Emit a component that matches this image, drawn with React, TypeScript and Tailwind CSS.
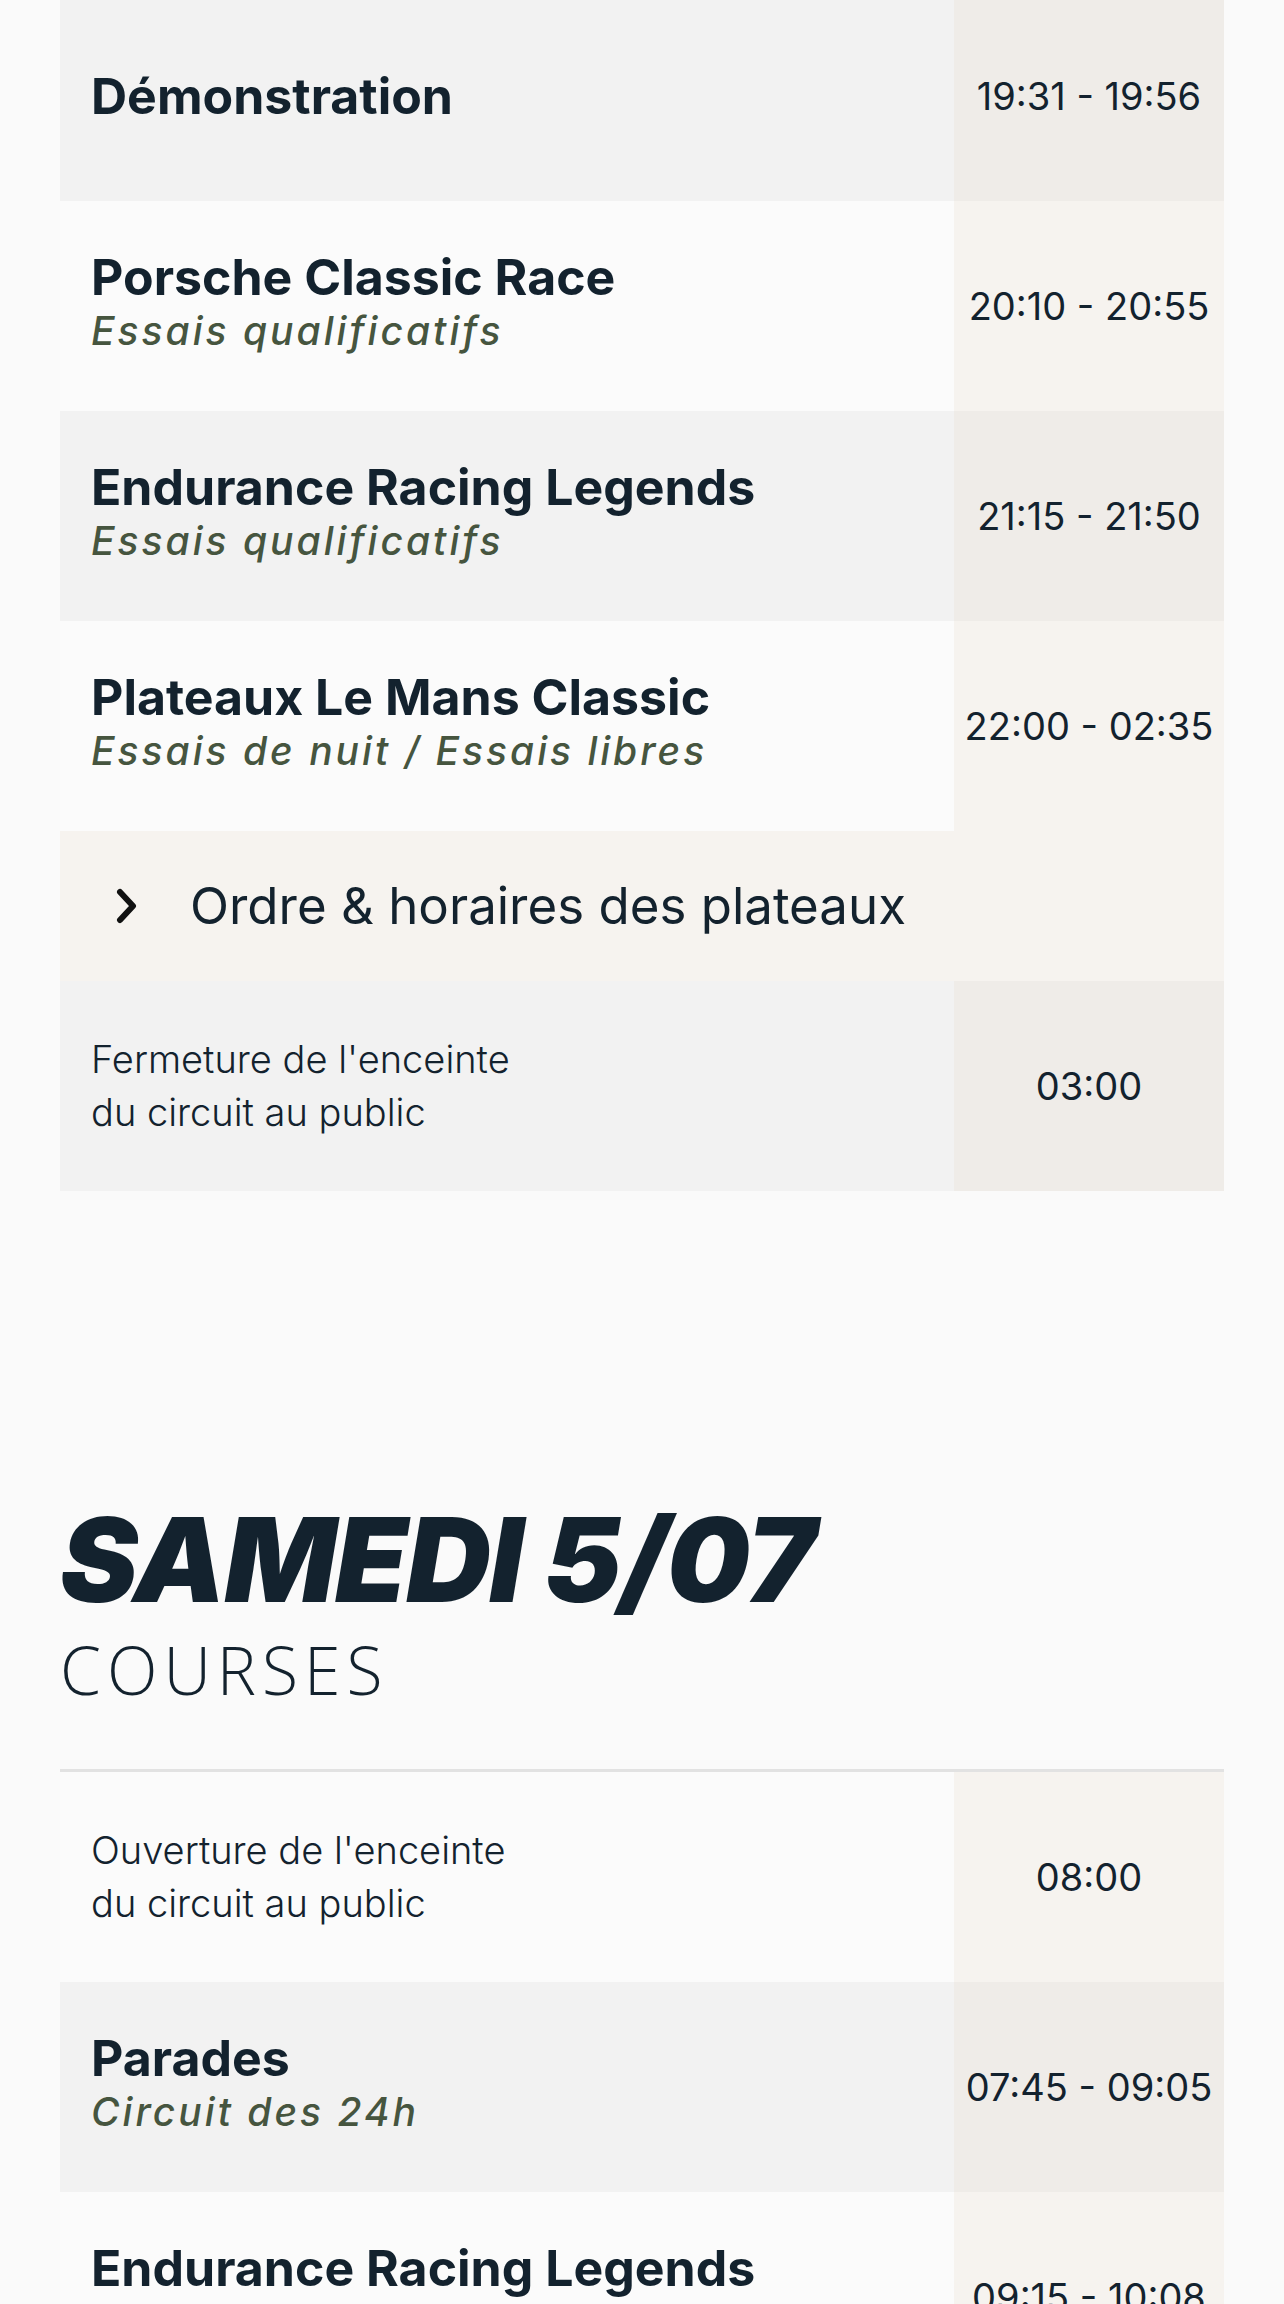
import { ReactNode } from "react";

type Slot = {
  title?: string;
  sub?: string;
  lines?: string[];
  time: string;
};

const friday: Slot[] = [
  { title: "Démonstration", time: "19:31 - 19:56" },
  { title: "Porsche Classic Race", sub: "Essais qualificatifs", time: "20:10 - 20:55" },
  { title: "Endurance Racing Legends", sub: "Essais qualificatifs", time: "21:15 - 21:50" },
  { title: "Plateaux Le Mans Classic", sub: "Essais de nuit / Essais libres", time: "22:00 - 02:35" },
];

const saturday: Slot[] = [
  { lines: ["Ouverture de l'enceinte", "du circuit au public"], time: "08:00" },
  { title: "Parades", sub: "Circuit des 24h", time: "07:45 - 09:05" },
  { title: "Endurance Racing Legends", sub: "Course", time: "09:15 - 10:08" },
];

function Row({ slot, shaded }: { slot: Slot; shaded: boolean }) {
  return (
    <div className="grid grid-cols-[1fr_270px] h-[210px]">
      <div className={`flex flex-col justify-center pl-[31px] pr-4 ${shaded ? "bg-[#f2f2f2]" : "bg-[#fbfbfb]"}`}>
        {slot.lines ? (
          <div className="font-['Inter',sans-serif] font-light text-[38px] leading-[53px] text-[#13222e]">
            {slot.lines.map((l) => (
              <div key={l}>{l}</div>
            ))}
          </div>
        ) : (
          <>
            <div className="font-['Inter',sans-serif] font-bold text-[50px] leading-[50px] text-[#13222e]">
              {slot.title}
            </div>
            {slot.sub && (
              <div className="font-['Inter',sans-serif] font-medium italic text-[39px] leading-[58px] tracking-[3px] text-[#46553f]">
                {slot.sub}
              </div>
            )}
          </>
        )}
      </div>
      <div
        className={`flex items-center justify-center font-['Inter',sans-serif] text-[38px] text-[#13222e] whitespace-nowrap ${
          shaded ? "bg-[#efece8]" : "bg-[#f6f3ef]"
        }`}
      >
        {slot.time}
      </div>
    </div>
  );
}

function Chevron() {
  return (
    <svg width="22" height="36" viewBox="0 0 22 36" className="shrink-0">
      <path d="M4 4 L17 18 L4 32" fill="none" stroke="#111" strokeWidth="6" strokeLinecap="round" strokeLinejoin="round" />
    </svg>
  );
}

function Section({ children }: { children: ReactNode }) {
  return <div className="flex flex-col">{children}</div>;
}

export default function App() {
  return (
    <div className="bg-[#fafafa] h-[2304px] overflow-hidden">
      <div className="mx-[60px] -mt-[9px]">
        <Section>
          {friday.map((s, i) => (
            <Row key={s.time} slot={s} shaded={i % 2 === 0} />
          ))}

          <div className="h-[150px] bg-[#f6f3ef] flex items-center pl-[56px] gap-[52px]">
            <Chevron />
            <span className="font-['Inter',sans-serif] text-[51px] text-[#13222e]">Ordre &amp; horaires des plateaux</span>
          </div>

          <Row
            slot={{ lines: ["Fermeture de l'enceinte", "du circuit au public"], time: "03:00" }}
            shaded
          />
        </Section>

        <div className="pt-[310px]">
          <h2 className="font-['Inter',sans-serif] font-black italic text-[117px] leading-none tracking-[-1.5px] text-[#13222e]">
            SAMEDI 5/07
          </h2>
          <div className="mt-[18px] font-['Open_Sans',sans-serif] font-light text-[66px] leading-none tracking-[6px] text-[#13222e]">
            COURSES
          </div>
        </div>

        <div className="mt-[67px] border-t-[3px] border-[#e2e2e2]">
          {saturday.map((s, i) => (
            <Row key={s.time} slot={s} shaded={i % 2 === 1} />
          ))}
        </div>
      </div>
    </div>
  );
}
